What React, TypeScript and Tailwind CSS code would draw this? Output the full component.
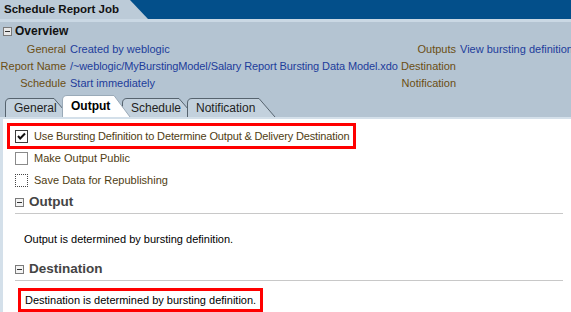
import React from "react";

const font = "font-['Liberation_Sans',Arial,sans-serif]";

function MinusBox({ dark }: { dark?: boolean }) {
  return (
    <svg width="9" height="9" viewBox="0 0 9 9" className="shrink-0">
      <rect x="0.5" y="0.5" width="8" height="8" fill={dark ? "#e8e8e8" : "#f4f4f4"} stroke="#7a7a7a" />
      <rect x="2" y="4" width="5" height="1" fill="#333" />
    </svg>
  );
}

function Tab({ label, active, width }: { label: string; active?: boolean; width: number }) {
  const h = active ? 23 : 20;
  return (
    <div
      className={`relative flex items-end pl-[9px] ${active ? "h-[23px] font-bold text-black z-10" : "h-[20px] text-[#222]"}`}
      style={{ width }}
    >
      <svg className="absolute left-0 top-0" width={width + 10} height={h} viewBox={`0 0 ${width + 10} ${h}`}>
        <path
          d={`M0.5 ${h} L0.5 6 Q0.5 1.5 5 1.5 L${width - 8} 1.5 L${width + 8} ${h}`}
          fill={active ? "#ffffff" : "#c3d1dd"}
          stroke={active ? "#9aaab8" : "#56636e"}
        />
      </svg>
      <span className={`relative text-[12px] leading-[16px] ${active ? "pb-[3px]" : "pb-[1px]"}`}>{label}</span>
    </div>
  );
}

export default function App() {
  return (
    <div className={`w-[571px] h-[312px] overflow-hidden bg-[#b4c4d2] ${font}`}>
      {/* title bar */}
      <div className="flex h-[19px] bg-[#034f8a]">
        <div className="relative w-[150px] bg-[#bccbd8] [clip-path:polygon(0_0,130px_0,148px_100%,0_100%)]">
          <span className="absolute left-[4px] top-[2px] text-[11.5px] font-bold leading-[15px] text-[#111]">
            Schedule Report Job
          </span>
        </div>
      </div>
      <div className="h-[3px] bg-[#cad8e4]" />

      {/* overview */}
      <div className="flex items-center gap-[3px] pl-[3px] pt-[2px]">
        <MinusBox dark />
        <span className="text-[12px] font-bold leading-[15px] text-[#111]">Overview</span>
      </div>
      <div className="mt-[2px] grid grid-cols-[66px_326px_56px_1fr] gap-x-[4px] text-[11px] leading-[17px]">
        <span className="text-right text-[#6b4e12]">General</span>
        <span className="text-[#1d3c9b]">Created by weblogic</span>
        <span className="text-right text-[#6b4e12]">Outputs</span>
        <span className="whitespace-nowrap text-[#1d3c9b]">View bursting definition</span>

        <span className="text-right text-[#6b4e12]">Report Name</span>
        <span className="whitespace-nowrap tracking-[-0.1px] text-[#1d3c9b]">
          /~weblogic/MyBurstingModel/Salary Report Bursting Data Model.xdo
        </span>
        <span className="text-right text-[#6b4e12]">Destination</span>
        <span />

        <span className="text-right text-[#6b4e12]">Schedule</span>
        <span className="text-[#1d3c9b]">Start immediately</span>
        <span className="text-right text-[#6b4e12]">Notification</span>
        <span />
      </div>

      {/* tabs */}
      <div className="mt-[2px] flex items-end pl-[5px]">
        <Tab label="General" width={57} />
        <Tab label="Output" width={60} active />
        <Tab label="Schedule" width={65} />
        <Tab label="Notification" width={80} />
      </div>

      {/* content */}
      <div className="h-full border-l-[3px] border-t-[2px] border-[#d4e0ea] bg-white pl-[4px] pt-[4px] text-[11px]">
        <div className="flex h-[26px] w-[349px] items-center gap-[6px] border-[3px] border-[#ff0000] pl-[5px]">
          <svg width="13" height="13" viewBox="0 0 13 13" className="shrink-0">
            <rect x="0.5" y="0.5" width="12" height="12" fill="#fff" stroke="#3c3c3c" />
            <path d="M3 6 L5.2 8.5 L10 3.5" fill="none" stroke="#111" strokeWidth="2" />
          </svg>
          <span className="whitespace-nowrap leading-[14px] tracking-[-0.15px] text-[#4f3d12]">
            Use Bursting Definition to Determine Output &amp; Delivery Destination
          </span>
        </div>
        <div className="flex h-[18px] items-center gap-[6px] pl-[8px]">
          <span className="h-[13px] w-[13px] border border-[#8a8a8a] bg-white" />
          <span className="leading-[14px] text-[#4f3d12]">Make Output Public</span>
        </div>
        <div className="mt-[4px] flex h-[18px] items-center gap-[6px] pl-[8px]">
          <span className="h-[13px] w-[13px] border border-dotted border-[#444] bg-white" />
          <span className="leading-[14px] text-[#4f3d12]">Save Data for Republishing</span>
        </div>

        <div className="mr-[8px] ml-[8px] mt-[4px] flex items-center gap-[5px] border-b border-[#c8c8c8] pb-[2px]">
          <MinusBox />
          <span className="text-[13.5px] font-bold leading-[18px] text-[#444]">Output</span>
        </div>
        <div className="ml-[17px] mt-[18px] leading-[14px] text-black">Output is determined by bursting definition.</div>

        <div className="mr-[8px] ml-[8px] mt-[14px] flex items-center gap-[5px] border-b border-[#c8c8c8] pb-[2px]">
          <MinusBox />
          <span className="text-[13.5px] font-bold leading-[18px] text-[#444]">Destination</span>
        </div>
        <div className="ml-[11px] mt-[7px] flex h-[24px] w-[245px] items-center whitespace-nowrap border-[3px] border-[#ff0000] pl-[4px] leading-[14px] text-black">
          Destination is determined by bursting definition.
        </div>
      </div>
    </div>
  );
}
